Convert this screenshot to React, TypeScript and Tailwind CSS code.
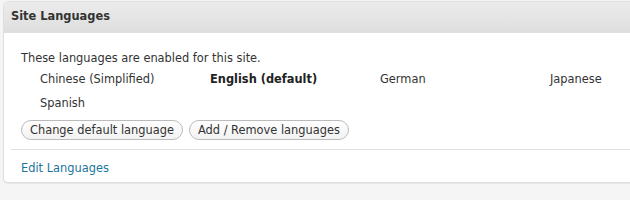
import React from 'react';

const languages = [
  { name: 'Chinese (Simplified)' },
  { name: 'English (default)', isDefault: true },
  { name: 'German' },
  { name: 'Japanese' },
  { name: 'Spanish' },
];

export default function App() {
  return (
    <div className="w-[630px] h-[200px] bg-[#f5f5f5] overflow-hidden pt-[1px] pl-[3px] font-['DejaVu_Sans',sans-serif] text-[11.4px] text-[#333]">
      {/* Site Languages box */}
      <div className="w-[640px] bg-white border border-[#dfdfdf] rounded-[5px] shadow-[0_1px_1px_rgba(0,0,0,0.06)] overflow-hidden">
        <div className="h-[31px] flex items-center pl-[7px] bg-[linear-gradient(to_bottom,#ececec,#dedede)] border-b border-[#dfdfdf]">
          <h3 className="font-bold text-[11.4px] text-[#333]">Site Languages</h3>
        </div>

        <div className="px-[7px]">
          <div className="pl-[10px] pt-[19px] pb-[9px]">
            <p className="leading-[13px]">These languages are enabled for this site.</p>
            <ul className="grid grid-cols-4 w-[699px] pl-[19px] mt-[8px] gap-y-[11px]">
              {languages.map((l) => (
                <li key={l.name} className={l.isDefault ? 'font-bold leading-[13px] text-[#222]' : 'leading-[13px]'}>
                  {l.name}
                </li>
              ))}
            </ul>
            <div className="flex gap-[6px] mt-[10px]">
              <button className="h-[20px] px-[8px] rounded-full border border-[#bbb] bg-[linear-gradient(to_bottom,#fefefe,#f2f2f2)] text-[11.4px] text-[#333] leading-[18px]">
                Change default language
              </button>
              <button className="h-[20px] px-[8px] rounded-full border border-[#bbb] bg-[linear-gradient(to_bottom,#fefefe,#f2f2f2)] text-[11.4px] text-[#333] leading-[18px]">
                Add / Remove languages
              </button>
            </div>
          </div>
          <div className="border-t border-[#dfdfdf] pl-[10px] pt-[10px] pb-[5px]">
            <a href="#" className="text-[#21759b] leading-[13px]">Edit Languages</a>
          </div>
        </div>
      </div>
    </div>
  );
}
